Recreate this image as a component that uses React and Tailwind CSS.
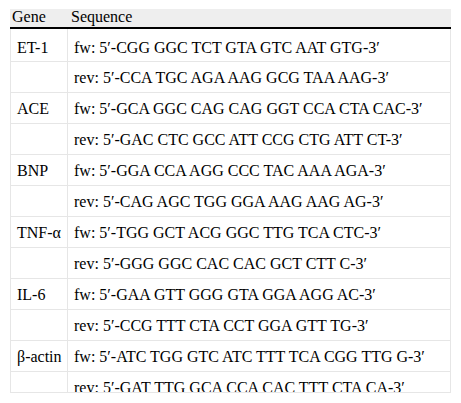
export default function App() {
  const rows = [
    ["ET-1", "fw: 5′-CGG GGC TCT GTA GTC AAT GTG-3′", "rev: 5′-CCA TGC AGA AAG GCG TAA AAG-3′"],
    ["ACE", "fw: 5′-GCA GGC CAG CAG GGT CCA CTA CAC-3′", "rev: 5′-GAC CTC GCC ATT CCG CTG ATT CT-3′"],
    ["BNP", "fw: 5′-GGA CCA AGG CCC TAC AAA AGA-3′", "rev: 5′-CAG AGC TGG GGA AAG AAG AG-3′"],
    ["TNF-α", "fw: 5′-TGG GCT ACG GGC TTG TCA CTC-3′", "rev: 5′-GGG GGC CAC CAC GCT CTT C-3′"],
    ["IL-6", "fw: 5′-GAA GTT GGG GTA GGA AGG AC-3′", "rev: 5′-CCG TTT CTA CCT GGA GTT TG-3′"],
    ["β-actin", "fw: 5′-ATC TGG GTC ATC TTT TCA CGG TTG G-3′", "rev: 5′-GAT TTG GCA CCA CAC TTT CTA CA-3′"],
  ];
  const lines = [];
  rows.forEach((r) => {
    lines.push([r[0], r[1]]);
    lines.push(["", r[2]]);
  });
  return (
    <div className="w-[461px] h-[403px] bg-white pt-[9px] pl-[10px] font-['Liberation_Serif','DejaVu_Serif',serif] text-[16px] text-black">
      <div className="w-[441px] h-[384px] overflow-hidden border-b border-[#e6e6e6] flex flex-col">
        <div className="flex h-[18px] shrink-0 bg-[#eeeeee] leading-[16px]">
          <div className="w-[58px] pl-[2px]">Gene</div>
          <div className="flex-1 pl-[3px]">Sequence</div>
        </div>
        <div className="h-[2px] shrink-0 bg-black"></div>
        <div className="flex flex-col border-x border-[#e6e6e6]">
          {lines.map((l, i) => (
            <div
              key={i}
              className={
                i === 0
                  ? "flex h-[33px] shrink-0 border-b border-[#e6e6e6] leading-[18px]"
                  : "flex h-[31px] shrink-0 border-b border-[#e6e6e6] leading-[18px]"
              }
            >
              <div className={i === 0 ? "w-[57px] shrink-0 border-r border-[#e6e6e6] pl-[6px] pt-[10px]" : "w-[57px] shrink-0 border-r border-[#e6e6e6] pl-[6px] pt-[7px]"}>
                {l[0]}
              </div>
              <div className={i === 0 ? "flex-1 pl-[6px] pt-[10px] whitespace-nowrap" : "flex-1 pl-[6px] pt-[7px] whitespace-nowrap"}>
                {l[1]}
              </div>
            </div>
          ))}
        </div>
      </div>
    </div>
  );
}
